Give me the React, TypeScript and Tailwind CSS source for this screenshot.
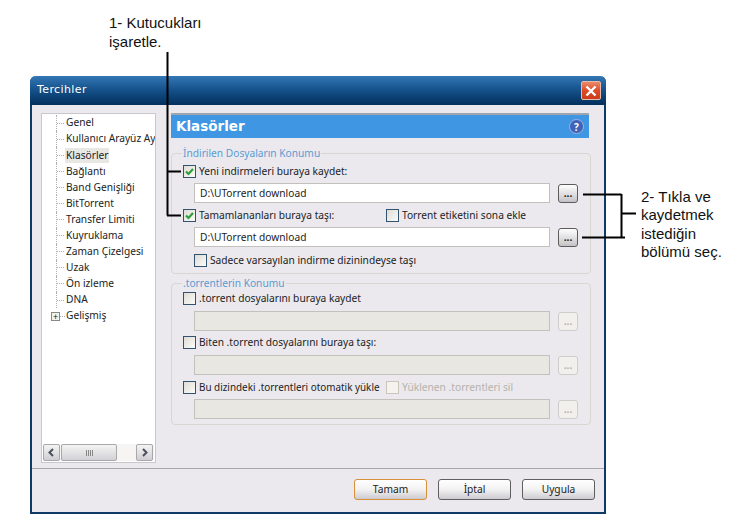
import React from "react";

const ui = { fontFamily: '"Noto Sans", Tahoma, sans-serif' };
const wide = { fontFamily: '"DejaVu Sans", Verdana, sans-serif' };
const note = { fontFamily: '"Liberation Sans", Arial, sans-serif' };

const treeItems = [
  "Genel",
  "Kullanıcı Arayüz Ayarları",
  "Klasörler",
  "Bağlantı",
  "Band Genişliği",
  "BitTorrent",
  "Transfer Limiti",
  "Kuyruklama",
  "Zaman Çizelgesi",
  "Uzak",
  "Ön izleme",
  "DNA",
];

const Check = ({ checked, disabled }: { checked?: boolean; disabled?: boolean }) => (
  <span
    className={`w-[13px] h-[13px] flex-shrink-0 border flex items-center justify-center ${
      disabled
        ? "border-[#c9c7ba] bg-[#f4f3ef]"
        : "border-[#31536f] bg-gradient-to-br from-[#dedcd4] to-[#fbfbf9]"
    }`}
  >
    {checked && (
      <svg width="11" height="11" viewBox="0 0 11 11">
        <path d="M2 5.5 L4.5 8 L9 3" fill="none" stroke="#2f9e3c" strokeWidth="2.2" />
      </svg>
    )}
  </span>
);

const CheckRow = ({
  label,
  checked,
  muted,
}: {
  label: string;
  checked?: boolean;
  muted?: boolean;
}) => (
  <label className="flex items-center h-[14px] gap-[3px] whitespace-nowrap">
    <Check checked={checked} disabled={muted} />
    <span className={`pt-[1px] ${muted ? "text-[#b5b3aa]" : "text-[#222]"}`}>{label}</span>
  </label>
);

const PathRow = ({ value, disabled }: { value?: string; disabled?: boolean }) => (
  <div className="flex items-center ml-[11px] h-5">
    <div
      className={`w-[356px] h-5 border flex items-center pl-[5px] pt-[2px] text-[#222] ${
        disabled ? "bg-[#e9e7e2] border-[#c3c1bb]" : "bg-white border-[#c3c1bb]"
      }`}
    >
      {value}
    </div>
    <button
      className={`ml-[8px] w-5 h-[19px] rounded-[3px] border flex items-end justify-center pb-[3px] leading-none font-bold ${
        disabled
          ? "border-[#cfcdc8] bg-[#f1f0ec] text-[#b5b3aa]"
          : "border-[#5c5c5c] bg-gradient-to-b from-white to-[#c4c2c6] text-[#222]"
      }`}
    >
      ...
    </button>
  </div>
);

const Group = ({
  title,
  className,
  children,
}: {
  title: string;
  className: string;
  children: React.ReactNode;
}) => (
  <fieldset className={`border border-[#d8d6d0] rounded-[4px] px-[11px] ${className}`}>
    <legend className="-ml-[1px] px-[1px] text-[#5b9bd0] h-[13px] leading-[13px]">{title}</legend>
    {children}
  </fieldset>
);

const DialogButton = ({ label, primary }: { label: string; primary?: boolean }) => (
  <button
    className={`w-[73px] h-[21px] rounded-[3px] border pt-[1px] text-[#222] bg-gradient-to-b from-white via-[#f3f2f2] to-[#cdcbd0] ${
      primary ? "border-[#d9903a]" : "border-[#5f5f5f]"
    }`}
  >
    {label}
  </button>
);

export default function App() {
  return (
    <div className="relative w-[732px] h-[520px] bg-white overflow-hidden" style={ui}>
      {/* annotations */}
      <div className="absolute left-[109px] top-[13px] text-[15px] leading-[19px] text-[#111]" style={note}>
        1- Kutucukları
        <br />
        işaretle.
      </div>
      <div className="absolute left-[641px] top-[188px] text-[15px] leading-[18.3px] text-[#111]" style={note}>
        2- Tıkla ve
        <br />
        kaydetmek
        <br />
        istediğin
        <br />
        bölümü seç.
      </div>

      {/* window */}
      <div className="absolute left-[30px] top-[76px] w-[576px] h-[438px] flex flex-col rounded-t-[6px] border-2 border-t-0 border-[#0e3a66] bg-[#ebe9ee]">
        <div className="h-[29px] -mx-[2px] flex items-center justify-between pl-[7px] pr-[5px] rounded-t-[6px] bg-gradient-to-b from-[#3377b5] via-[#145089] to-[#04305c]">
          <span className="text-white text-[11px] tracking-[0.4px]" style={wide}>
            Tercihler
          </span>
          <span className="w-[20px] h-[19px] rounded-[2px] border border-[#e8b9a8] bg-gradient-to-b from-[#e88a6a] via-[#dd4a26] to-[#c93c1c] flex items-center justify-center">
            <svg width="12" height="12" viewBox="0 0 12 12">
              <path d="M1.5 1.5 L10.5 10.5 M10.5 1.5 L1.5 10.5" stroke="#fff" strokeWidth="2.4" />
            </svg>
          </span>
        </div>

        <div className="flex-1 flex pt-[8px] pl-[9px] text-[10.2px]">
          {/* tree */}
          <div className="w-[115px] h-[350px] bg-white border border-[#c9c7cc] relative overflow-hidden flex-shrink-0">
            <div className="pt-[1px] pl-[14px]">
              {treeItems.map((item) => (
                <div key={item} className="h-[16.1px] flex items-center whitespace-nowrap border-l border-dotted border-[#b0b0b0]">
                  <span className="w-[7px] mr-[1px] flex-shrink-0 border-t border-dotted border-[#b0b0b0]" />
                  <span className={`px-[1px] ${item === "Klasörler" ? "bg-[#e9e7e4]" : ""} text-[#222]`}>{item}</span>
                </div>
              ))}
              <div className="h-4 flex items-center whitespace-nowrap -ml-[5px]">
                <span className="w-[9px] h-[9px] flex-shrink-0 border border-[#888] bg-[#f2f1ec] flex items-center justify-center text-[9px] leading-none text-[#222]">
                  +
                </span>
                <span className="w-[5px] flex-shrink-0 border-t border-dotted border-[#b0b0b0]" />
                <span className="px-[1px] text-[#222]">Gelişmiş</span>
              </div>
            </div>
            {/* horizontal scrollbar */}
            <div className="absolute left-[1px] right-[1px] bottom-[1px] h-[17px] flex items-center bg-[#f6f5f4]">
              <div className="w-[17px] h-[17px] rounded-[2px] border border-[#a9a8ab] bg-gradient-to-b from-[#f4f4f4] to-[#cfced2] flex items-center justify-center">
                <svg width="9" height="9" viewBox="0 0 9 9">
                  <path d="M6 1 L2.5 4.5 L6 8" fill="none" stroke="#4a5060" strokeWidth="2" />
                </svg>
              </div>
              <div className="ml-[1px] w-[56px] h-[17px] rounded-[2px] border border-[#a9a8ab] bg-gradient-to-b from-[#f4f4f4] to-[#d2d1d4] flex items-center justify-center gap-[1px]">
                <span className="w-px h-[6px] bg-[#888]" />
                <span className="w-px h-[6px] bg-[#888]" />
                <span className="w-px h-[6px] bg-[#888]" />
                <span className="w-px h-[6px] bg-[#888]" />
              </div>
              <div className="ml-auto mr-[1px] w-[17px] h-[17px] rounded-[2px] border border-[#a9a8ab] bg-gradient-to-b from-[#f4f4f4] to-[#cfced2] flex items-center justify-center">
                <svg width="9" height="9" viewBox="0 0 9 9">
                  <path d="M3 1 L6.5 4.5 L3 8" fill="none" stroke="#4a5060" strokeWidth="2" />
                </svg>
              </div>
            </div>
          </div>

          {/* right panel */}
          <div className="ml-[15px] w-[420px] flex flex-col">
            <div className="w-[418px] h-[25px] border-t-2 border-[#9fa5ad] bg-[#3f97e3] flex items-center justify-between pl-[5px] pr-[5px]">
              <span className="text-white text-[13.5px] font-bold" style={wide}>
                Klasörler
              </span>
              <span className="w-[15px] h-[15px] rounded-full bg-[#3e63b8] border border-[#9db4e0] text-white text-[10px] font-bold flex items-center justify-center leading-none">
                ?
              </span>
            </div>

            <Group title="İndirilen Dosyaların Konumu" className="mt-[9px] h-[127px]">
              <div className="mt-[4px]">
                <CheckRow label="Yeni indirmeleri buraya kaydet:" checked />
              </div>
              <div className="mt-[5px]">
                <PathRow value="D:\UTorrent download" />
              </div>
              <div className="mt-[5px] flex items-center">
                <div className="w-[203px]">
                  <CheckRow label="Tamamlananları buraya taşı:" checked />
                </div>
                <CheckRow label="Torrent etiketini sona ekle" />
              </div>
              <div className="mt-[5px]">
                <PathRow value="D:\UTorrent download" />
              </div>
              <div className="mt-[6px] ml-[11px]">
                <CheckRow label="Sadece varsayılan indirme dizinindeyse taşı" />
              </div>
            </Group>

            <Group title=".torrentlerin Konumu" className="mt-[3px] h-[148px]">
              <div className="mt-[1px]">
                <CheckRow label=".torrent dosyalarını buraya kaydet" />
              </div>
              <div className="mt-[6px]">
                <PathRow disabled />
              </div>
              <div className="mt-[4px]">
                <CheckRow label="Biten .torrent dosyalarını buraya taşı:" />
              </div>
              <div className="mt-[6px]">
                <PathRow disabled />
              </div>
              <div className="mt-[5px] flex items-center">
                <div className="w-[203px] text-[9.9px]">
                  <CheckRow label="Bu dizindeki .torrentleri otomatik yükle" />
                </div>
                <CheckRow label="Yüklenen .torrentleri sil" muted />
              </div>
              <div className="mt-[5px]">
                <PathRow disabled />
              </div>
            </Group>
          </div>
        </div>

        <div className="h-[44px] border-t border-[#a8a7ab] flex items-start justify-end gap-[11px] pt-[10px] pr-[9px] text-[10.2px]">
          <DialogButton label="Tamam" primary />
          <DialogButton label="İptal" />
          <DialogButton label="Uygula" />
        </div>
      </div>

      {/* callout lines */}
      <svg className="absolute left-0 top-0 pointer-events-none" width="732" height="520">
        <path
          d="M167.5 52 V215.5 M167 171.5 H181 M167 215.5 H181 M583 194.5 H621.5 M582 237.5 H625 M621.5 194 V238 M621 213.5 H636"
          fill="none"
          stroke="#000"
          strokeWidth="2"
        />
      </svg>
    </div>
  );
}
